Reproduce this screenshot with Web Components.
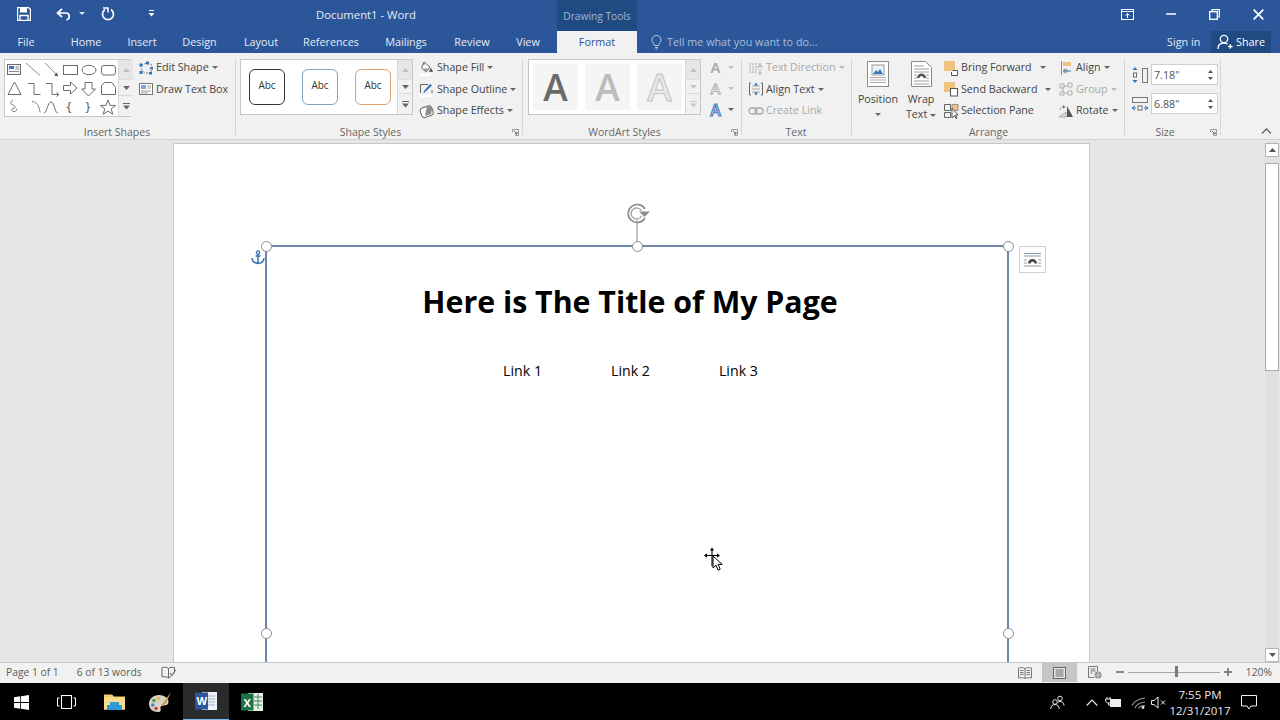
<!DOCTYPE html>
<html><head><meta charset="utf-8"><title>Document1 - Word</title>
<style>
html,body{margin:0;padding:0;width:1280px;height:720px;overflow:hidden;font-family:"Open Sans","Noto Sans",sans-serif;background:#000}
word-app{display:flex;flex-direction:column;width:1280px;height:720px}
svg{display:block}
</style></head><body>
<word-app></word-app>
<script>
const def=(name,html,extra={})=>customElements.define(name,class extends HTMLElement{
  constructor(){super();this.attachShadow({mode:'open'}).innerHTML=html;}
  connectedCallback(){extra.init&&extra.init.call(this);}
});

def('rb-caret',`<style>:host{display:inline-block;width:6px;height:4px}i{display:block;width:0;height:0;border:3px solid transparent;border-top:3.5px solid var(--c,#666);border-bottom:0}</style><i></i>`);

def('word-titlebar',`<style>
:host{display:flex;height:31px;background:#2b579a;color:#e4eaf3;font-size:11.3px;flex:none}
.qat{width:316px;position:relative;display:flex;align-items:center;flex:none;height:28px}
.qat svg{flex:none}
.t{width:241px;flex:none;line-height:30px}
.ctx{width:80px;flex:none;background:#1f4a82;color:#9fb6d6;text-align:center;font-size:10.2px;line-height:32px}
.sp{flex:1}
.win{display:flex;height:28px;flex:none}
.win div{width:43.5px;display:flex;align-items:center;justify-content:center}
</style>
<div class="qat">
<svg style="margin-left:17px" width="14" height="14" viewBox="0 0 14 14"><path d="M.5.5h11l2 2v11H.5z" fill="none" stroke="#fff" stroke-width="1.4"/><path d="M3 1v4.500h7V1z" fill="#fff"/><path d="M3 13V8.500h8V13" fill="none" stroke="#fff" stroke-width="1.4"/></svg>
<svg style="margin-left:25px" width="16" height="13" viewBox="0 0 16 13"><path d="M6 1 1.500 5 6 9M2 5h8c4 0 4.500 6 .5 7" fill="none" stroke="#fff" stroke-width="1.700"/></svg>
<rb-caret style="--c:#dfe6f0;margin-left:7px"></rb-caret>
<svg style="margin-left:16px" width="14" height="14" viewBox="0 0 14 14"><path d="M4 2.500a5.500 5.500 0 1 0 6 0" fill="none" stroke="#fff" stroke-width="1.700"/><path d="M2 1h5v4.500" fill="none" stroke="#fff" stroke-width="1.500"/></svg>
<svg style="margin-left:33px" width="7" height="8" viewBox="0 0 7 8"><path d="M1 .5h5" stroke="#fff"/><path d="M.5 3h6L3.500 6.500z" fill="#fff"/></svg>
</div>
<div class="t">Document1 - Word</div>
<div class="ctx">Drawing Tools</div>
<div class="sp"></div>
<div class="win">
<div><svg width="13" height="11" viewBox="0 0 13 11"><rect x=".5" y=".5" width="12" height="10" fill="none" stroke="#fff"/><path d="M1 2.500h11" stroke="#fff"/><path d="M6.500 9V4.500M4.500 6.500l2-2 2 2" fill="none" stroke="#fff"/></svg></div>
<div><svg width="10" height="2" viewBox="0 0 10 2"><path d="M0 1h10" stroke="#fff" stroke-width="1.500"/></svg></div>
<div><svg width="11" height="11" viewBox="0 0 11 11"><path d="M3 2.500V.7h7.300V8H8.500" fill="none" stroke="#fff" stroke-width="1.200"/><rect x=".7" y="2.700" width="7.600" height="7.600" fill="none" stroke="#fff" stroke-width="1.300"/></svg></div>
<div><svg width="11" height="11" viewBox="0 0 11 11"><path d="M.7.7l9.600 9.600M10.300.7.700 10.300" stroke="#fff" stroke-width="1.700"/></svg></div>
</div>`);

def('word-tabs',`<style>
:host{display:flex;height:22px;background:#2b579a;color:#e6ebf4;font-size:10.8px;line-height:22px;flex:none}
div{text-align:center;flex:none}
.fmt{background:#f1f1f1;color:#2b579a;width:80px;margin-left:8px}
.tell{width:530px;display:flex;align-items:center;color:#a9bcd9;padding-left:14px;box-sizing:border-box;font-size:10.8px;text-align:left;gap:5px}
.sign{width:44px;text-align:left}
.share{width:60px;background:#1f4a82;display:flex;align-items:center;gap:3px;padding-left:6px;box-sizing:border-box;color:#fff}
</style>
<div style="width:52px">File</div><div style="width:68px">Home</div><div style="width:44px">Insert</div><div style="width:71px">Design</div><div style="width:52px">Layout</div><div style="width:88px">References</div><div style="width:62px">Mailings</div><div style="width:70px">Review</div><div style="width:42px">View</div>
<div class="fmt">Format</div>
<div class="tell"><svg width="11" height="15" viewBox="0 0 11 15"><path d="M3.500 10.500C3 8 1 7.500 1 5a4.500 4.500 0 0 1 9 0c0 2.500-2 3-2.500 5.500zM4 12.500h3M4.500 14h2" fill="none" stroke="#b9c9e0"/></svg><span>Tell me what you want to do...</span></div>
<div class="sign">Sign in</div>
<div class="share"><svg width="16" height="16" viewBox="0 0 16 16"><circle cx="7" cy="5" r="3.700" fill="none" stroke="#fff" stroke-width="1.300"/><path d="M1 15c0-4 2.500-6 6-6 1.500 0 2.500.3 3.500 1M11 12.500h4.500M13.300 10.300v4.500" fill="none" stroke="#fff" stroke-width="1.300"/></svg><span>Share</span></div>`);

def('word-ribbon',`<style>:host{display:flex;height:87px;background:#f1f1f1;border-bottom:1px solid #d2d2d2;box-sizing:border-box;flex:none;color:#444;font-size:10.700px}
.c{flex:1;display:flex;justify-content:flex-end;align-items:flex-end;padding:0 8px 5px 0}</style><slot></slot>
<div class="c"><svg width="11" height="6" viewBox="0 0 11 6"><path d="M1 5.500l4.500-4.500 4.500 4.500" fill="none" stroke="#666" stroke-width="1.400"/></svg></div>`);

def('ribbon-group',`<style>
:host{display:block;position:relative;flex:none;box-sizing:border-box;height:86px}
:host::after{content:"";position:absolute;right:0;top:5px;bottom:4px;width:1px;background:#d6d6d6}
.b{display:flex;height:68px;padding-top:3px;box-sizing:border-box}
.l{position:absolute;left:0;right:0;top:72px;text-align:center;color:#666;font-size:10.500px;line-height:15px}
.l span{position:relative;left:var(--lx,0)}
svg{position:absolute;right:4px;top:76px}
</style><div class="b"><slot></slot></div><div class="l"><span id="s"></span></div>
<svg id="la" width="7" height="7" viewBox="0 0 7 7"><path d="M.5 3V.5H6.500V6.500H3.500" fill="none" stroke="#999"/><path d="M2 2l3 3M5 3v2H3" fill="none" stroke="#666"/></svg>`,{init(){this.shadowRoot.getElementById('s').textContent=this.getAttribute('label');if(!this.hasAttribute('launcher'))this.shadowRoot.getElementById('la').style.display='none';}});

def('rb-col',`<style>:host{display:flex;flex-direction:column;flex:none;margin-top:1px}</style><slot></slot>`);

def('rb-cmd',`<style>
:host{display:flex;align-items:center;height:21.500px;white-space:nowrap;flex:none;color:#444;line-height:21px}
:host([off]){color:#a8a8a8;--c:#b8b8b8}
.i{width:16px;height:16px;flex:none;margin-right:2px;display:block}
.lb{display:block}
rb-caret{margin-left:var(--g,3px);margin-top:1px}
</style><span class="i"><slot name="i"></slot></span><span class="lb"><slot></slot></span><rb-caret id="k"></rb-caret>`,{init(){if(this.hasAttribute('nocaret'))this.shadowRoot.getElementById('k').style.display='none';}});

def('rb-large',`<style>
:host{display:flex;flex-direction:column;align-items:center;flex:none;color:#444;line-height:15px;text-align:center;margin-top:1px}
.i{height:28px;margin:4px 0 3px;display:block;flex:none}
</style><span class="i"><slot name="i"></slot></span><slot></slot>`);

def('gal-scroll',`<style>
:host{display:grid;grid-template-rows:20px 1fr 20px;flex:none;width:14px;border-left:1px solid #d8d8d8;background:#f1f1f1}
div{display:flex;align-items:center;justify-content:center;border-bottom:1px solid #dcdcdc}
div:last-child{border:0}
.u{background:#e6e6e6}
</style>
<div class="u"><svg width="7" height="4" viewBox="0 0 7 4"><path d="M0 4h7L3.500 0z" fill="#c0c0c0"/></svg></div>
<div><svg width="7" height="4" viewBox="0 0 7 4"><path d="M0 0h7L3.500 4z" fill="var(--d,#666)"/></svg></div>
<div><svg width="7" height="7" viewBox="0 0 7 7"><path d="M0 .5h7" stroke="var(--d,#666)"/><path d="M0 2.500h7L3.500 6.500z" fill="var(--d,#666)"/></svg></div>`);

def('shape-gallery',`<style>:host{display:flex;flex:none;width:127px;height:58px;border:1px solid #c6c6c6;box-sizing:border-box;background:#fff;margin:3px 0 0 4px}
svg{flex:none}</style>
<svg width="113" height="56" viewBox="5 60 113 56" fill="none" stroke="#6c6c6c" stroke-width="1">
<rect x="7.500" y="64.500" width="13" height="10" fill="#f4f6f9"/><path d="M9 66h5v3H9z" fill="#3c78c2" stroke="none"/><path d="M15.500 67h3.500M15.500 69h3.500M9 71.500h10" stroke="#8a8a8a"/>
<path d="M26 63l14 12.500M45 63l12.500 12.500" stroke="#8c8c8c"/><path d="M58 76.500l-1-4-3 3z" fill="#555" stroke="none"/>
<rect x="63.500" y="65.500" width="14" height="9"/><ellipse cx="89" cy="70" rx="7" ry="4.700"/><rect x="101.500" y="65.500" width="14" height="9.500" rx="2.500"/>
<path d="M14.500 82 8 94.500h13zM28 83.500h6v11h6.500M46 83.500h6v11h6M56.500 92.500l2.500 2-2.500 2"/>
<path d="M63.500 85.500h7v-3.500l6.500 6-6.500 6v-3.500h-7zM85 82.500h7v6.500h3.500l-7 7-7-7H85zM104.500 82.500h7.500l3.500 5v7h-14v-9z"/>
<path d="M13 100c-3 2-3 4 0 5 3 1.500 3 3 0 3.500-2.500.5-1 3 1 3 2.500 0 3.500-2 2-3" stroke-width=".9"/><path d="M32 101.500c4 0 7.500 4 8 11" stroke="#8a8a8a"/><path d="M44 113c3 0 3.500-11 7-11 3.500 0 3.500 11 7 11" />
<text x="66.500" y="111" font-family="Open Sans" font-size="13" fill="#555" stroke="none">{</text><text x="85.500" y="111" font-family="Open Sans" font-size="13" fill="#555" stroke="none">}</text>
<path d="M108 100l2 5.300 5.500.2-4.300 3.400 1.600 5.300-4.800-3.100-4.800 3.100 1.600-5.300-4.300-3.400 5.500-.2z"/>
</svg><gal-scroll></gal-scroll>`);

def('style-gallery',`<style>:host{display:flex;flex:none;width:173px;height:56px;border:1px solid #c6c6c6;box-sizing:border-box;background:#fff;margin:3px 0 0 4px}
.a{flex:1;display:flex;padding:9px 0 0 8px;gap:17px;box-sizing:border-box}
.a div{width:36px;height:36px;box-sizing:border-box;border-radius:6px;border:1.300px solid #333;font-size:10px;text-align:center;line-height:31px;color:#333}
.a div:nth-child(2){border-color:#7fa5c4}.a div:nth-child(3){border-color:#dea36f}
</style><div class="a"><div>Abc</div><div>Abc</div><div>Abc</div></div><gal-scroll></gal-scroll>`);

def('wordart-gallery',`<style>:host{display:flex;flex:none;width:173px;height:56px;border:1px solid #c6c6c6;box-sizing:border-box;background:#fff;margin:3px 0 0 5px}
.a{flex:1;display:flex;padding:4px 0 0 4px;gap:7px;box-sizing:border-box}
.a div{width:45px;height:46px;background:#f5f5f5;font:600 37px/46px "Open Sans",sans-serif;text-align:center;color:#6a6a6a}
.a div:nth-child(2){color:#bcbcbc}
.a div:nth-child(3){color:#e8e8e8;-webkit-text-stroke:1px #c4c4c4}
gal-scroll{--d:#c8c8c8}
</style><div class="a"><div>A</div><div>A</div><div>A</div></div><gal-scroll></gal-scroll>`);

def('wa-tools',`<style>:host{display:flex;flex-direction:column;flex:none;margin:1px 0 0 7px}
div{height:21.500px;display:flex;align-items:center;gap:5px;font:600 15px/21px "Open Sans",sans-serif;width:28px}
span{width:15px;text-align:center;display:block}
.a{color:#a8a8a8}.b{color:#f4f4f4;-webkit-text-stroke:.8px #aaa}.c{color:#cfe0f4;-webkit-text-stroke:1px #3f78bc;font-size:16px}
</style><div class="a"><span>A</span><rb-caret style="--c:#c0c0c0"></rb-caret></div><div class="b"><span>A</span><rb-caret style="--c:#c0c0c0"></rb-caret></div><div class="c"><span>A</span><rb-caret></rb-caret></div>`);

def('spin-box',`<style>:host{display:flex;align-items:center;height:21px;width:67px;box-sizing:border-box;border:1px solid #d0d0d0;background:#fff;color:#555;font-size:10.700px;padding-left:2px;position:relative}
span{flex:1}.s{width:13px;flex:none;display:flex;flex-direction:column;gap:4px;align-items:center}
</style><span><slot></slot></span><div class="s"><svg width="5" height="3" viewBox="0 0 5 3"><path d="M0 3h5L2.500 0z" fill="#555"/></svg><svg width="5" height="3" viewBox="0 0 5 3"><path d="M0 0h5L2.500 3z" fill="#555"/></svg></div>`);

def('size-row',`<style>:host{display:flex;align-items:center;gap:2px;height:21px;padding-left:6px}.i{width:18px;height:18px;flex:none;display:block}</style><span class="i"><slot name="i"></slot></span><slot></slot>`);

def('selection-frame',`<style>
:host{position:absolute;left:91px;top:101px;width:744px;height:700px;box-sizing:border-box;border:solid #6c87a8;border-width:2px 2px 0 2px;display:block;color:#000}
h1{margin:0;padding:36px 14px 0 0;text-align:center;font:700 30.300px/38px "Open Sans",sans-serif;color:#000;white-space:nowrap}
.links{display:flex;justify-content:center;gap:69px;margin:40px 13px 0 0;font-size:14.200px;line-height:20px}
.h{position:absolute;width:11px;height:11px;box-sizing:border-box;border:1.800px solid #8b8b8b;border-radius:50%;background:#fff;z-index:2}
.ov{position:absolute}
</style>
<div class="h" style="left:-6.500px;top:-6.500px"></div><div class="h" style="left:364.500px;top:-6.500px"></div><div class="h" style="right:-6.500px;top:-6.500px"></div>
<div class="h" style="left:-6.500px;top:380.500px"></div><div class="h" style="right:-6.500px;top:380.500px"></div>
<svg class="ov" style="left:359px;top:-44px" width="26" height="40" viewBox="0 0 26 40"><path d="M11 17v23" stroke="#a0a0a0" stroke-width="1.200"/><path d="M19 6a9 9 0 1 0 0 9" fill="none" stroke="#8c8c8c" stroke-width="1.600"/><path d="M15.500 8a5.500 5.500 0 1 0 0 5" fill="none" stroke="#a6a6a6" stroke-width="1.400"/><path d="M13 8.500h11l-5.500 5.500z" fill="#8c8c8c"/></svg>
<svg class="ov" style="left:-16px;top:3px" width="14" height="15" viewBox="0 0 14 15"><circle cx="7" cy="2.500" r="1.600" fill="none" stroke="#3f74b3" stroke-width="1.300"/><path d="M7 4v9.500M4.500 6h5M1 8c0 3.500 3 5 6 5.500 3-.5 6-2 6-5.500" fill="none" stroke="#3f74b3" stroke-width="1.500"/></svg>
<svg class="ov" style="right:-39px;top:-1px" width="27" height="27" viewBox="0 0 27 27"><rect x=".5" y=".5" width="26" height="26" fill="#fff" stroke="#cfcfcf"/><path d="M5 7.500h17M5 10h17M5 20h17M5 17h3M19 17h3M5 14h3M19 14h3" stroke="#8c9aa6"/><path d="M9 17.500c0-6 9-6 9 0h-2.500c0-2.500-4-2.500-4 0z" fill="#444"/></svg>
<h1>Here is The Title of My Page</h1>
<div class="links"><span>Link 1</span><span>Link 2</span><span>Link 3</span></div>`);

def('doc-page',`<style>:host{display:block;position:relative;margin:4px 0 0 174px;width:915px;height:800px;background:#fff;box-shadow:0 0 0 1px #c8c8c8}</style><slot></slot>`);

def('v-scroll',`<style>:host{display:flex;flex-direction:column;width:14px;flex:none;margin:3px 1px 0 0;background:#e1e1e1}
.b{height:14px;background:#fff;border:1px solid #b5b5b5;box-sizing:border-box;display:flex;align-items:center;justify-content:center;flex:none}
.g{height:6px;flex:none}.t{height:208px;background:#fff;border:1px solid #ababab;box-sizing:border-box;flex:none}.f{flex:1}
</style><div class="b"><svg width="7" height="4" viewBox="0 0 7 4"><path d="M0 4h7L3.500 0z" fill="#555"/></svg></div><div class="g"></div><div class="t"></div><div class="f"></div>
<div class="b"><svg width="7" height="4" viewBox="0 0 7 4"><path d="M0 0h7L3.500 4z" fill="#555"/></svg></div>`);

def('doc-area',`<style>:host{display:flex;flex:none;height:522px;background:#e6e6e6;overflow:hidden;position:relative}
.m{flex:1;overflow:hidden;position:relative}
.cur{position:absolute;left:703px;top:407px}
</style><div class="m"><slot></slot></div><v-scroll></v-scroll>
<svg class="cur" width="20" height="26" viewBox="0 0 20 26"><path d="M9 2v17M3 8.500h13" stroke="#000" stroke-width="1.100"/><path d="M9 .5 7 3.500h4zM1 8.500l3-2.200v4.400zM17 8.500l-3-2.200v4.400z" fill="#000"/><path d="M10 9v12l3-2.800 2 5 2.200-1-2-4.800h4z" fill="#fff" stroke="#000" stroke-width="1"/></svg>`);

def('word-status',`<style>:host{display:flex;align-items:center;height:18px;padding-bottom:2px;flex:none;background:#f1f1f1;border-top:1px solid #c6c6c6;color:#5c5c5c;font-size:10.300px;position:relative}
.sp{flex:1}span{white-space:nowrap}
.v{height:19px;margin-bottom:-1px;display:flex;align-items:center;justify-content:center;flex:none}
</style>
<span style="margin-left:6px">Page 1 of 1</span><span style="margin-left:18px">6 of 13 words</span>
<svg style="margin-left:19px" width="15" height="13" viewBox="0 0 15 13"><path d="M7.500 2.500C6 1 3 1 1 1.500v9.500c2-.5 5-.5 6.500 1V2.500zM7.500 2.500C9 1 11 1 13.500 1.500V5M7.500 12c.7-.7 1.500-1 2.500-1.200" fill="none" stroke="#666"/><path d="M9 7l2 2.500L14.500 4" fill="none" stroke="#666" stroke-width="1.200"/></svg>
<div class="sp"></div>
<div class="v" style="width:35px"><svg width="14" height="12" viewBox="0 0 14 12"><path d="M7 1.500C5.500.5 3 .5 .5 1v10c2.500-.5 5-.5 6.500.5 1.500-1 4-1 6.500-.5V1C11 .5 8.500.5 7 1.500zM7 1.500v10M2 3.500h3.500M2 5.500h3.500M2 7.500h3.500M8.500 3.500H12M8.500 5.500H12M8.500 7.500H12" fill="none" stroke="#777"/></svg></div>
<div class="v" style="width:35px;background:#c6c6c6"><svg width="13" height="12" viewBox="0 0 13 12"><rect x=".5" y=".5" width="12" height="11" fill="#e8e8e8" stroke="#666"/><path d="M2.500 3h8M2.500 5h8M2.500 7h8M2.500 9h8" stroke="#666"/></svg></div>
<div class="v" style="width:35px"><svg width="14" height="13" viewBox="0 0 14 13"><path d="M6 11.500H.5V.5h9v5M2.500 3h5M2.500 5h5M2.500 7h2" fill="none" stroke="#777"/><circle cx="10" cy="9" r="3.500" fill="#8a8a8a"/><path d="M7 9h6M10 6v6" stroke="#eee" stroke-width=".7"/></svg></div>
<svg style="margin-left:4px" width="8" height="2" viewBox="0 0 8 2"><path d="M0 1h8" stroke="#666" stroke-width="1.500"/></svg>
<div style="position:relative;width:92px;height:12px;margin-left:4px;flex:none;display:flex;align-items:center"><div style="width:92px;height:1px;background:#a6a6a6"></div><div style="position:absolute;left:47px;top:0;width:3px;height:11px;background:#7a7a7a"></div></div>
<svg style="margin-left:4px" width="8" height="8" viewBox="0 0 8 8"><path d="M0 4h8M4 0v8" stroke="#666" stroke-width="1.500"/></svg>
<span style="width:48px;text-align:right;padding-right:8px;box-sizing:border-box;flex:none">120%</span>`);

def('win-taskbar',`<style>:host{display:flex;align-items:center;height:38px;background:#000;color:#e8e8e8;flex:none;font-size:11.500px}
.c{height:38px;display:flex;align-items:center;justify-content:center;flex:none;box-sizing:border-box}
.on{background:#2b2b2b;border-bottom:2px solid #76b9ed}
.sp{flex:1}
.clk{line-height:16px;text-align:center;display:block;white-space:nowrap;padding-top:1px}
</style>
<div class="c" style="width:43px"><svg width="15" height="15" viewBox="0 0 15 15"><path d="M0 2.200 6.200 1.300v5.800H0zM7 1.200 15 0v7.100H7zM0 7.900h6.200v5.800L0 12.800zM7 7.900h8V15l-8-1.200z" fill="#fff"/></svg></div>
<div class="c" style="width:46px"><svg width="19" height="14" viewBox="0 0 19 14"><rect x="4.500" y=".5" width="10" height="13" fill="none" stroke="#fff" stroke-width="1.100"/><path d="M2.500 3H.5v8h2M16.500 3h2v8h-2" fill="none" stroke="#fff"/></svg></div>
<div class="c" style="width:48px;margin-left:1px"><svg width="21" height="18" viewBox="0 0 21 18"><path d="M0 1.500h8l2 2h11v13H0z" fill="#f2cf6e"/><path d="M0 4.500h21v12H0z" fill="#f6dc8b"/><path d="M6 9h9v3h3v5H3v-5h3z" fill="#2f9bd6"/></svg></div>
<div class="c" style="width:45px"><svg width="23" height="22" viewBox="0 0 23 22"><path d="M10 4C4 4 0 8 0 13c0 5 4 8 9 8 3 0 3-2 2.500-3.500-.5-2 1-3 3-3 3 0 5-1 5-3.500C19.500 7 15 4 10 4z" fill="#d9d3c4"/><circle cx="5" cy="9.500" r="1.700" fill="#3fa34d"/><circle cx="9.500" cy="7.500" r="1.700" fill="#e2b93b"/><circle cx="3.800" cy="14" r="1.700" fill="#2f7fd6"/><circle cx="7" cy="17.500" r="1.700" fill="#c93c3c"/><path d="M22 1 14 12l-2 2 3 .5 2-2z" fill="#c99a5a"/></svg></div>
<div class="c on" style="width:46px"><svg width="22" height="22" viewBox="0 0 22 22"><rect x="7" y="2" width="15" height="18" fill="#eef2f7"/><path d="M13 6h7M13 9h7M13 12h7M13 15h7" stroke="#9fb2cc"/><path d="M0 2.500h13v17H0z" fill="#2b579a"/><text x="1.500" y="15" font-family="Open Sans" font-size="11" font-weight="700" fill="#fff">W</text></svg></div>
<div class="c" style="width:46px"><svg width="22" height="22" viewBox="0 0 22 22"><rect x="7" y="2" width="15" height="18" fill="#e6efe8"/><path d="M13 6h8M13 10h8M13 14h8M17 3v15" stroke="#3f8a5a"/><path d="M0 2.500h12.500v17H0z" fill="#1e7145"/><text x="2.500" y="15.500" font-family="Open Sans" font-size="11" font-weight="700" fill="#fff">X</text></svg></div>
<div class="sp"></div>
<div class="c" style="width:30px"><svg width="15" height="15" viewBox="0 0 15 15"><circle cx="10" cy="3.500" r="2.300" fill="none" stroke="#eee"/><circle cx="5" cy="7" r="2.300" fill="none" stroke="#eee"/><path d="M.7 14c0-3 2-4.500 4.300-4.500S9.300 11 9.300 14M8 7.500c.5-.7 1.200-1 2-1 2.500 0 4 1.500 4 4" fill="none" stroke="#eee"/></svg></div>
<div class="c" style="width:24px;margin-left:8px"><svg width="12" height="7" viewBox="0 0 12 7"><path d="M.7 6.500 6 1l5.300 5.500" fill="none" stroke="#eee" stroke-width="1.100"/></svg></div>
<div class="c" style="width:18px"><svg width="16" height="11" viewBox="0 0 16 11"><path d="M2 0v2M5 0v2M.7 2h5.600v2c0 1-1 2-2.800 2S.7 5 .7 4zM3.500 6v2h2" fill="none" stroke="#eee"/><rect x="5.500" y="2.500" width="10" height="7" fill="#eee" stroke="#eee"/></svg></div>
<div class="c" style="width:24px;margin-left:4px"><svg width="15" height="13" viewBox="0 0 15 13"><path d="M1 9.500C3 5 7 3 14 2M4 12c1-3 4-5 10-6M7.500 12.500c.5-1.500 2.500-3 6.500-3" fill="none" stroke="#999" stroke-width="1.100"/><circle cx="12" cy="11.500" r="1.400" fill="#eee"/></svg></div>
<div class="c" style="width:16px"><svg width="15" height="13" viewBox="0 0 15 13"><path d="M.5 4.500h2.500l4-3.500v11l-4-3.500H.5z" fill="none" stroke="#eee"/><path d="M10 4.500l4 4M14 4.500l-4 4" stroke="#eee"/></svg></div>
<div class="c" style="width:64px;margin-left:2px"><div class="clk">7:55 PM<br>12/31/2017</div></div>
<div class="c" style="width:34px"><svg width="16" height="15" viewBox="0 0 16 15"><path d="M.5.500h15v10.500H10l-2 3-2-3H.5z" fill="none" stroke="#eee"/></svg></div>
<div style="width:14px;flex:none"></div>`);

const ic=(s)=>`<svg slot="i" width="16" height="16" viewBox="0 0 16 16" fill="none">${s}</svg>`;
const I={
edit:ic('<path d="M3 5 9 3l5 2-2 4 2 4-7 0-3-2z" stroke="#7a7a7a" stroke-dasharray="2 1.500"/><path d="M1.500 3.500h3v3h-3zM8 1.500h3v3H8zM12.500 7h2.500v2.500h-2.500zM1.500 11h3v3h-3zM11 12h3v2.500h-3z" fill="#2f74bd"/>'),
tb:ic('<rect x="1.500" y="2.500" width="13" height="11" fill="#fff" stroke="#777"/><path d="M3 4h5v4H3z" fill="#7da8d8"/><path d="M9.500 5H13M9.500 7H13M3 10h10M3 12h7" stroke="#999"/>'),
fill:ic('<path d="M5 2 11 7 7 12 2.500 8z" fill="#fff" stroke="#666"/><path d="M3 8.500h8L7 12.500z" fill="#9a9a9a"/><path d="M5 2.500V5M12 8.500l1.500 3-3 0z" fill="#555" stroke="#666"/><path d="M1 13.500h11v2.500H1z" fill="#fff"/>'),
out:ic('<path d="M1.500 12V3.500H9M13 9v3" stroke="#666"/><path d="M6 11l-1.500 1.500L5 10l6-7 2 1.500z" fill="#2f74bd"/><path d="M1 13.500h12v2.500H1z" fill="#fff"/>'),
eff:ic('<rect x="1.500" y="3.500" width="12" height="10" rx="3" transform="rotate(-20 8 8)" fill="#fff" stroke="#666"/><path d="M8 3l5.500 1.500L12 11 6 13z" fill="#8d8d8d"/>'),
dir:ic('<path d="M2 3v10M5 3v10M8 3v10" stroke="#a8a8a8" stroke-dasharray="2 .7"/><text x="9.500" y="8" font-family="Open Sans" font-size="8" fill="#a0a0a0">A</text><path d="M12 9v5M10.500 12.500 12 14.500l1.500-2" stroke="#a8a8a8"/>'),
alg:ic('<path d="M3 2H1.500v12H3M13 2h1.500v12H13" stroke="#666"/><path d="M4 5h8M4 8h8M4 11h8" stroke="#aaa"/><path d="M8 1.500 6 4.500h4zM8 14.500 6 11.500h4z" fill="#2f74bd"/>'),
lnk:ic('<rect x="1" y="5" width="8" height="6" rx="3" stroke="#a8a8a8" stroke-width="1.300"/><rect x="7" y="5" width="8" height="6" rx="3" stroke="#a8a8a8" stroke-width="1.300"/>'),
bf:ic('<path d="M1 1h11v10H1z" fill="#efc27f"/><path d="M9.500 10.500h5v5h-6v-3.500" fill="#fff" stroke="#555"/>'),
sb:ic('<path d="M1 1h11v10H1z" fill="#efc27f"/><rect x="7.500" y="7.500" width="7" height="7.500" fill="#fff" stroke="#555"/>'),
sel:ic('<path d="M1.500 1.500h6v6h-6zM1.500 9.500h6v5h-6z" stroke="#666"/><rect x="9" y="1.500" width="6" height="6" fill="#efc27f" stroke="#999"/><path d="M9 5v10l2.500-2.500 1.500 3 1-.5-1.500-3H15z" fill="#fff" stroke="#555"/>'),
ali:ic('<path d="M3.500 1v14" stroke="#888"/><path d="M5 2h8v4H5z" fill="#efc27f"/><path d="M5 9h5v3.500H5z" fill="#efc27f"/><path d="M13 11H6M8 8.500 5.500 11 8 13.500" stroke="#2f74bd"/>'),
grp:ic('<path d="M2 3h4v4H2zM2 11h4v3H2zM10 2h4v4h-4zM10 10h4v4h-4zM6 5h4M6 12h4M5 5v7" stroke="#b0b0b0"/>'),
rot:ic('<path d="M9 14V3l6 11z" fill="#555"/><path d="M1 14l7-5v5z" fill="#ddd" stroke="#aaa"/><path d="M2 7c0-2 1.500-3 4-3" stroke="#aaa"/><path d="M5 2l2.500 2L5 5.500z" fill="#2f74bd"/>'),
pos:`<svg slot="i" width="22" height="26" viewBox="0 0 22 26"><rect x=".5" y=".5" width="21" height="25" fill="#fff" stroke="#8a8a8a"/><rect x="5" y="4" width="12" height="10" fill="#eef3f8" stroke="#999"/><path d="M6 13l3-4 2 2 2-3 3 5z" fill="#3d7ab8"/><path d="M3 16.500h16M3 19h16M3 21.500h16" stroke="#aaa"/></svg>`,
wrap:`<svg slot="i" width="21" height="26" viewBox="0 0 21 26"><path d="M.5.500h14l6 6v19H.5z" fill="#fff" stroke="#8a8a8a"/><path d="M3 5h10M3 8h15M3 11h15M3 14h3M15 14h3M3 17h3M15 17h3M3 20h15M3 23h15" stroke="#a0a0a0"/><path d="M6 17c0-6 9-6 9 0h-2.500c0-2.500-4-2.500-4 0z" fill="#555"/></svg>`,
h:`<svg slot="i" width="18" height="18" viewBox="0 0 18 18" fill="none"><path d="M4 1 1.500 4h5zM4 17 1.500 14h5z" fill="#2f74bd"/><rect x="2.500" y="7" width="3" height="4" fill="#fff" stroke="#666"/><rect x="11.500" y="2.500" width="5" height="14" stroke="#777"/></svg>`,
w:`<svg slot="i" width="18" height="18" viewBox="0 0 18 18" fill="none"><rect x="1.500" y="2.500" width="15" height="5" stroke="#777"/><path d="M1 13h4M13 13h4M4 11 1 13l3 2M14 11l3 2-3 2" stroke="#2f74bd"/><rect x="7" y="11" width="4" height="4" fill="#fff" stroke="#666"/></svg>`
};
document.querySelector('word-app').innerHTML=`
<word-titlebar></word-titlebar>
<word-tabs></word-tabs>
<word-ribbon>
<ribbon-group label="Insert Shapes" style="width:236px;--lx:-1px">
 <shape-gallery></shape-gallery>
 <rb-col style="margin-left:7px"><rb-cmd>${I.edit}Edit Shape</rb-cmd><rb-cmd nocaret>${I.tb}Draw Text Box</rb-cmd></rb-col>
</ribbon-group>
<ribbon-group label="Shape Styles" launcher style="width:287px;--lx:-9px">
 <style-gallery></style-gallery>
 <rb-col style="margin-left:6px"><rb-cmd>${I.fill}Shape Fill</rb-cmd><rb-cmd>${I.out}Shape Outline</rb-cmd><rb-cmd>${I.eff}Shape Effects</rb-cmd></rb-col>
</ribbon-group>
<ribbon-group label="WordArt Styles" launcher style="width:219px;--lx:-8px">
 <wordart-gallery></wordart-gallery>
 <wa-tools></wa-tools>
</ribbon-group>
<ribbon-group label="Text" style="width:110px;--lx:-1px">
 <rb-col style="margin-left:6px"><rb-cmd off>${I.dir}Text Direction</rb-cmd><rb-cmd>${I.alg}Align Text</rb-cmd><rb-cmd off nocaret>${I.lnk}Create Link</rb-cmd></rb-col>
</ribbon-group>
<ribbon-group label="Arrange" style="width:273px">
 <rb-large style="width:42px;margin-left:5px">${I.pos}<span>Position</span><rb-caret style="margin-top:6px"></rb-caret></rb-large>
 <rb-large style="width:44px">${I.wrap}<span>Wrap</span><span>Text <rb-caret></rb-caret></span></rb-large>
 <rb-col><rb-cmd style="--g:8px">${I.bf}Bring Forward</rb-cmd><rb-cmd style="--g:8px">${I.sb}Send Backward</rb-cmd><rb-cmd nocaret>${I.sel}Selection Pane</rb-cmd></rb-col>
 <rb-col style="position:absolute;left:206px;top:3px"><rb-cmd>${I.ali}Align</rb-cmd><rb-cmd off>${I.grp}Group</rb-cmd><rb-cmd>${I.rot}Rotate</rb-cmd></rb-col>
</ribbon-group>
<ribbon-group label="Size" launcher style="width:96px;--lx:-8px">
 <rb-col style="margin-top:8px;gap:8px"><size-row>${I.h}<spin-box>7.18"</spin-box></size-row><size-row>${I.w}<spin-box>6.88"</spin-box></size-row></rb-col>
</ribbon-group>
</word-ribbon>
<doc-area><doc-page><selection-frame></selection-frame></doc-page></doc-area>
<word-status></word-status>
<win-taskbar></win-taskbar>`;
</script></body></html>
